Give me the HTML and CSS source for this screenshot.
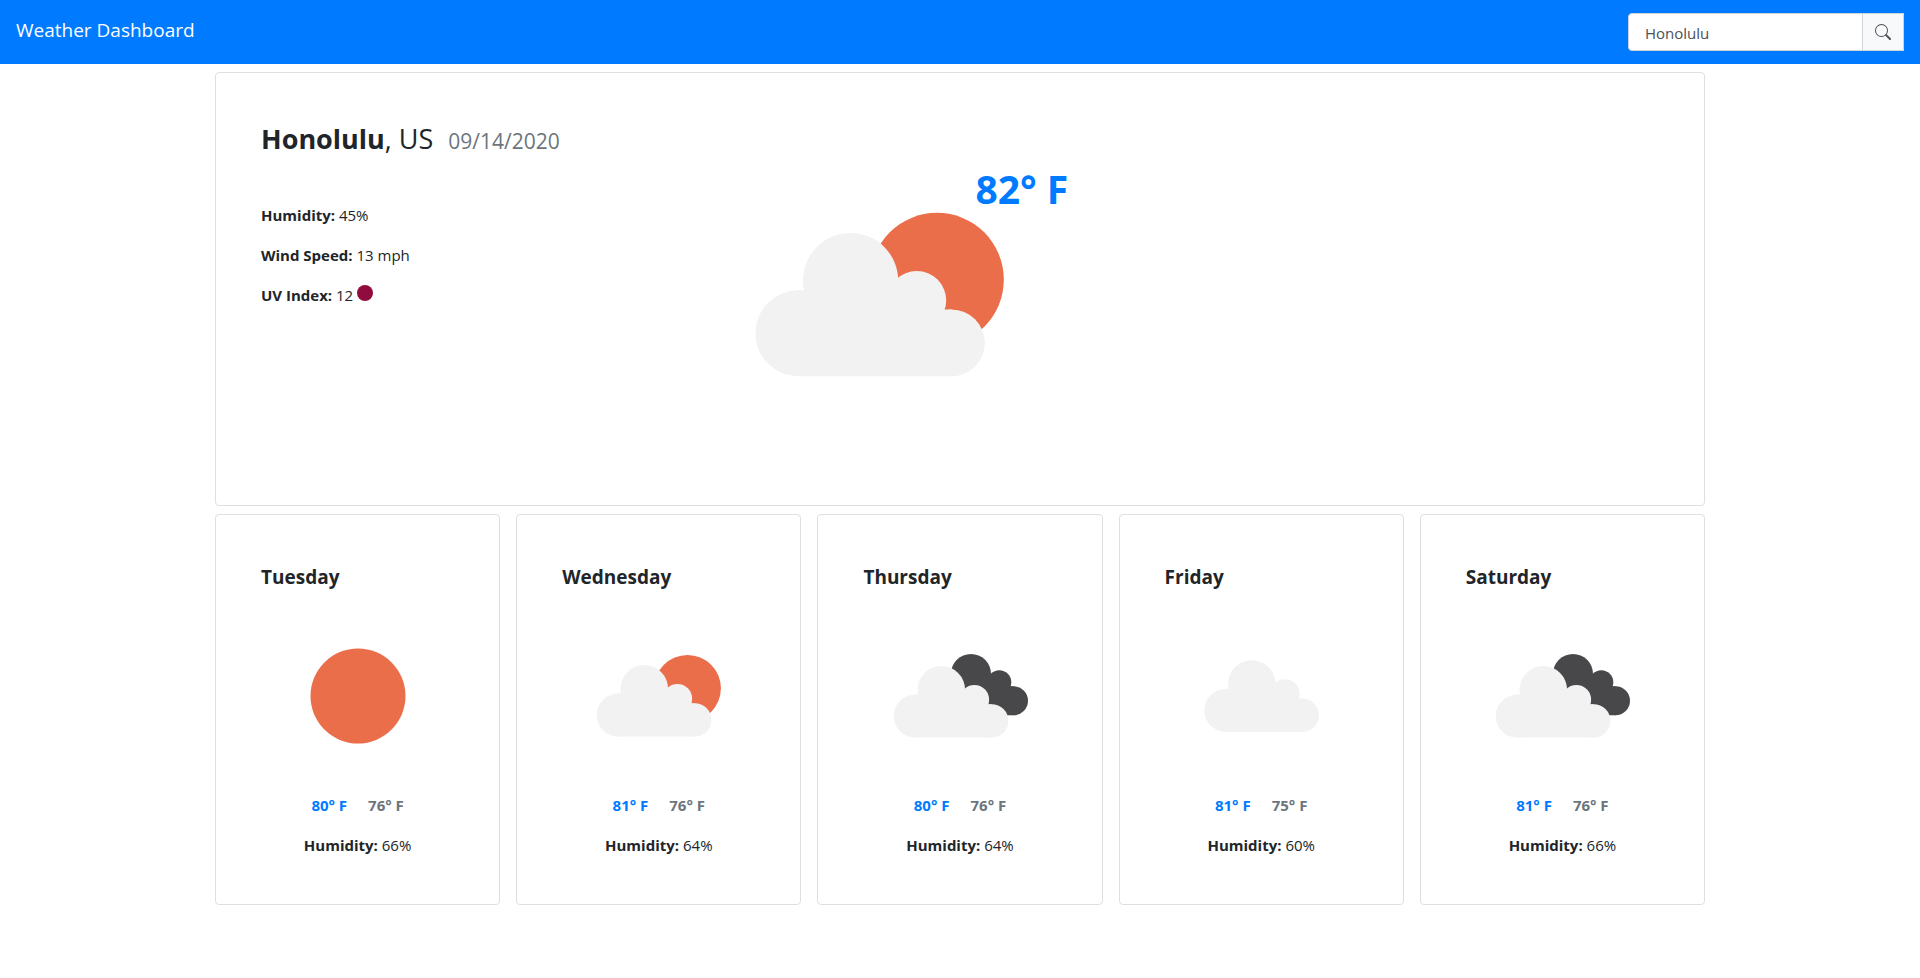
FILE: index.html
```html
<!DOCTYPE html>
<html lang="en">
<head>
  <meta charset="utf-8">
  <meta name="viewport" content="width=device-width, initial-scale=1">
  <title>Weather Dashboard</title>
  <link rel="stylesheet" href="styles.css">
</head>
<body>
  <svg class="sprite" aria-hidden="true">
    <symbol id="cloud" viewBox="0 0 200 200">
      <g fill="#f2f2f2">
        <circle cx="59.2" cy="119.1" r="21.5"/>
        <circle cx="85.3" cy="92.8" r="23.8"/>
        <circle cx="118.4" cy="102.7" r="14.7"/>
        <circle cx="135.7" cy="123.9" r="16.7"/>
        <path d="M59.2 97.6H118.6V107.2H135.7V140.6H59.2Z"/>
      </g>
    </symbol>
    <symbol id="clear" viewBox="0 0 200 200">
      <circle cx="100" cy="100" r="47.5" fill="#eb6e4b"/>
    </symbol>
    <symbol id="few" viewBox="0 0 200 200">
      <circle cx="128.5" cy="92.3" r="33.4" fill="#eb6e4b"/>
      <use href="#cloud" width="200" height="200"/>
    </symbol>
    <symbol id="scattered" viewBox="0 0 200 200">
      <use href="#cloud" x="5.6" y="-4.7" width="200" height="200"/>
    </symbol>
    <symbol id="broken" viewBox="0 0 200 200">
      <g fill="#48484a">
        <circle cx="111" cy="78" r="20"/>
        <circle cx="139.3" cy="86.2" r="12"/>
        <circle cx="153.5" cy="104.8" r="14.5"/>
        <path d="M111 78H131L139.3 90.3H153.5V119.3H111Z"/>
      </g>
      <use href="#cloud" x="-4" y="1" width="200" height="200"/>
    </symbol>
  </svg>

  <header class="navbar">
    <a class="brand" href="#">Weather Dashboard</a>
    <form class="search">
      <input class="search-input" type="text" value="Honolulu" aria-label="City">
      <button class="search-button" type="button" aria-label="Search">
        <svg width="16" height="16" viewBox="0 0 16 16" fill="currentColor" aria-hidden="true">
          <path fill-rule="evenodd" d="M10.442 10.442a1 1 0 0 1 1.415 0l3.85 3.85a1 1 0 0 1-1.414 1.415l-3.85-3.85a1 1 0 0 1 0-1.415z"/>
          <path fill-rule="evenodd" d="M6.5 12a5.5 5.5 0 1 0 0-11 5.5 5.5 0 0 0 0 11zM13 6.5a6.5 6.5 0 1 1-13 0 6.5 6.5 0 0 1 13 0z"/>
        </svg>
      </button>
    </form>
  </header>

  <main class="dashboard">
    <section class="card current">
      <div class="details">
        <h1 class="city"><strong>Honolulu</strong>, US <small class="date">09/14/2020</small></h1>
        <p><strong>Humidity:</strong> 45%</p>
        <p><strong>Wind Speed:</strong> 13 mph</p>
        <p><strong>UV Index:</strong> 12 <span class="uv-dot"></span></p>
      </div>
      <div class="conditions">
        <svg class="current-icon" role="img" aria-label="Few clouds"><use href="#few"/></svg>
        <p class="current-temp">82° F</p>
      </div>
    </section>

    <section class="forecast">
      <article class="card day">
        <h2 class="day-name">Tuesday</h2>
        <svg class="day-icon" role="img" aria-label="Clear sky"><use href="#clear"/></svg>
        <p class="temps"><span class="high">80° F</span><span class="low">76° F</span></p>
        <p><strong>Humidity:</strong> 66%</p>
      </article>
      <article class="card day">
        <h2 class="day-name">Wednesday</h2>
        <svg class="day-icon" role="img" aria-label="Few clouds"><use href="#few"/></svg>
        <p class="temps"><span class="high">81° F</span><span class="low">76° F</span></p>
        <p><strong>Humidity:</strong> 64%</p>
      </article>
      <article class="card day">
        <h2 class="day-name">Thursday</h2>
        <svg class="day-icon" role="img" aria-label="Broken clouds"><use href="#broken"/></svg>
        <p class="temps"><span class="high">80° F</span><span class="low">76° F</span></p>
        <p><strong>Humidity:</strong> 64%</p>
      </article>
      <article class="card day">
        <h2 class="day-name">Friday</h2>
        <svg class="day-icon" role="img" aria-label="Scattered clouds"><use href="#scattered"/></svg>
        <p class="temps"><span class="high">81° F</span><span class="low">75° F</span></p>
        <p><strong>Humidity:</strong> 60%</p>
      </article>
      <article class="card day">
        <h2 class="day-name">Saturday</h2>
        <svg class="day-icon" role="img" aria-label="Broken clouds"><use href="#broken"/></svg>
        <p class="temps"><span class="high">81° F</span><span class="low">76° F</span></p>
        <p><strong>Humidity:</strong> 66%</p>
      </article>
    </section>
  </main>
</body>
</html>
```

FILE: styles.css
```css
* {
  box-sizing: border-box;
}

body {
  margin: 0;
  background: #fff;
  color: #212529;
  font-family: "Open Sans", "Noto Sans", sans-serif;
  font-size: 15px;
  line-height: 24px;
}

h1,
h2,
p {
  margin: 0;
}

.sprite {
  position: absolute;
  width: 0;
  height: 0;
}

.navbar {
  display: flex;
  align-items: flex-start;
  justify-content: space-between;
  padding: 13px 16px;
  background: #007bff;
}

.brand {
  color: #fff;
  font-size: 19px;
  line-height: 34px;
  text-decoration: none;
}

.search {
  display: flex;
}

.search-input {
  width: 235px;
  height: 38px;
  padding: 1px 16px 0;
  border: 1px solid #ced4da;
  border-radius: 4px 0 0 4px;
  background: #fff;
  color: #495057;
  font: inherit;
}

.search-button {
  display: flex;
  align-items: center;
  justify-content: center;
  width: 42px;
  margin-left: -1px;
  padding: 0;
  border: 1px solid #ced4da;
  background: #f8f9fa;
  color: #495057;
}

.dashboard {
  display: grid;
  grid-template-columns: minmax(0, 1fr);
  gap: 8px;
  max-width: 1490px;
  margin: 8px auto;
}

.card {
  border: 1px solid #dfdfdf;
  border-radius: 4px;
  background: #fff;
}

.current {
  display: grid;
  grid-template-columns: 30% 400px;
  padding: 22px 45px 10px;
}

.details {
  display: flex;
  flex-direction: column;
  gap: 16px;
  padding-top: 27px;
}

.city {
  margin-bottom: 29px;
  font-size: 27px;
  font-weight: 400;
  line-height: 34px;
}

.date {
  margin-left: 8px;
  color: #6c757d;
  font-size: 21px;
}

.uv-dot {
  display: inline-block;
  width: 16px;
  height: 16px;
  border-radius: 50%;
  background: #900c3f;
}

.conditions {
  display: grid;
}

.current-icon {
  grid-area: 1 / 1;
  width: 400px;
  height: 400px;
}

.current-temp {
  grid-area: 1 / 1;
  padding: 70px 0 0 295px;
  color: #007bff;
  font-size: 39px;
  font-weight: 700;
  line-height: 48px;
}

.forecast {
  display: grid;
  grid-template-columns: repeat(5, minmax(0, 1fr));
  gap: 16px;
}

.day {
  display: flex;
  flex-direction: column;
  align-items: center;
  padding: 50px 45px 47px;
}

.day-name {
  align-self: flex-start;
  font-size: 19px;
  font-weight: 700;
  line-height: 24px;
}

.day-icon {
  flex: none;
  width: 200px;
  height: 200px;
  margin: 7px 0 -3px;
}

.temps {
  display: flex;
  gap: 21px;
  margin-bottom: 16px;
  font-weight: 700;
}

.high {
  color: #007bff;
}

.low {
  color: #6c757d;
}
```
